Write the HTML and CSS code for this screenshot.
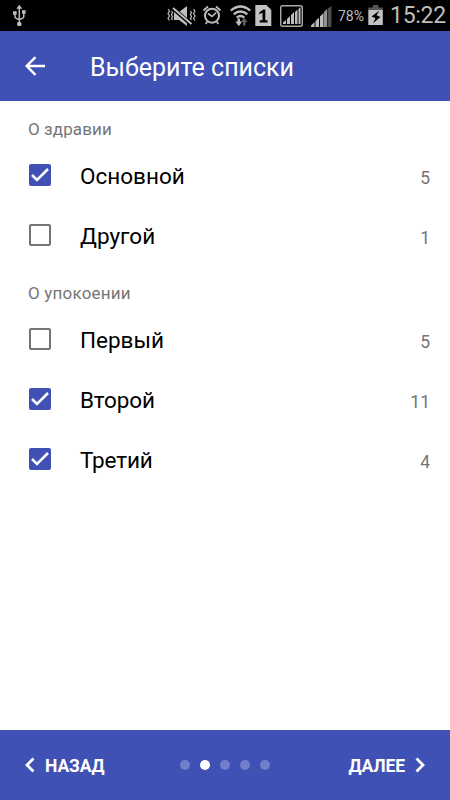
FILE: index.html
```html
<!DOCTYPE html>
<html lang="ru">
<head>
<meta charset="utf-8">
<title>Выберите списки</title>
<link rel="stylesheet" href="styles.css">
</head>
<body>
<div class="screen">
  <div class="status">
    <svg class="usb" width="16" height="24" viewBox="12 4 16 24" fill="none" stroke="#bdbdbd" stroke-width="1.5"><path d="M19.3 8v15M15 14v2.5q0 2 4.3 3q4.5-1 4.5-3V13"/><path d="M19.3 4.8l3 4h-6zM13 11.2h3.7v3.6H13zM22 10.2h3.6v3.6H22z" fill="#bdbdbd" stroke="none"/><circle cx="19.3" cy="24" r="2.3" fill="#bdbdbd" stroke="none"/></svg>
    <svg class="mute" width="30" height="24" viewBox="167 4 30 24" fill="none" stroke="#bdbdbd" stroke-width="1.2"><path d="M174 12h5l8-6v20l-8-6h-5z" fill="#bdbdbd" stroke="none"/><path d="M172 7.5L192 25" stroke="#000" stroke-width="4"/><path d="M173 8l18.500 16" stroke-width="2"/><path d="M168 9l1.500 2-1.500 2.500 1.500 2.500-1.500 2.500 1.500 2M171.500 11l1 1.500-1 2 1 2-1 2 1 1.500M190.500 11l1 1.500-1 2 1 2-1 2 1 1.500M193.500 9l1.500 2-1.500 2.500 1.500 2.500-1.500 2.500 1.500 2"/></svg>
    <svg class="alarm" width="20" height="24" viewBox="202 4 20 24" fill="none" stroke="#bdbdbd" stroke-width="2"><circle cx="212" cy="15.700" r="7"/><path d="M203.500 10.500l4.500-4M216 6.500l4.500 4M205.500 24l2-2.500M218.500 24l-2-2.500M208 13.500l4 3 4.200-4" stroke-width="1.700"/></svg>
    <svg class="wifi" width="22" height="24" viewBox="230 4 22 24" fill="none" stroke="#bdbdbd" stroke-width="2.400"><path d="M230.800 10.600q9.700-8.200 19.400 0M233.700 14.200q6.800-5.600 13.600 0M236.700 17.600q3.800-3 7.600 0"/><path d="M237.500 18.500h2.500v3h2.200l-3.400 4.700-3.400-4.700h2.100z" fill="#bdbdbd" stroke="none"/><path d="M243 25.500V22h-2.200l3.400-4.300 3.300 4.300H245.500v3.500z" fill="#626262" stroke="none"/></svg>
    <svg class="sim" width="17" height="24" viewBox="255 4 17 24"><path d="M255.300 5h11l5 5v16h-16z" fill="#c2c2c2"/><path d="M259.300 12.500l4-3h2v10.700h2.200v2.300h-7.800v-2.300h2.800v-7.500l-3.200 1.500z" fill="#000"/></svg>
    <svg class="boxed" width="24" height="24" viewBox="280 4 24 24"><rect x="280.700" y="5.700" width="21.600" height="20.600" rx="2" fill="none" stroke="#aaa" stroke-width="1.400"/><path d="M283 24v-1.500l3-2.500v4zM287 24v-5l3-3v8zM291 24v-9l3-3v12zM295 24V12l2.500-2.500V24zM298.500 24V9l2-2v17z" fill="#bdbdbd"/></svg>
    <svg class="signal" width="22" height="24" viewBox="310 4 22 24"><path d="M311 27v-1.500l3.500-3.500v5zM315.500 27v-6l3.500-3.500V27zM320 27V16.500l3.500-3.500v14z" fill="#bdbdbd"/><path d="M324 27V12l3-3v18z" fill="#929292"/><path d="M327.500 27V9l4-3v21z" fill="#4d4d4d"/></svg>
    <span class="percent">78%</span>
    <svg class="battery" width="16" height="24" viewBox="368 4 16 24"><path d="M368.300 10V7.500h4.500V5h5.500v2.500h4.500V10z" fill="#555"/><path d="M368.300 10h14.500v15h-14.500z" fill="#c2c2c2"/><path d="M379.500 10.500l-8 6 4 1.800-2.500 5 7.500-6.300-4-1.700z" fill="#000"/></svg>
    <span class="clock">15:22</span>
  </div>
  <header class="appbar">
    <svg width="20" height="20" viewBox="0 0 20 20" fill="none" stroke="#fff" stroke-width="2.400"><path d="M20 10H2M10.500 1.200L1.700 10l8.800 8.800"/></svg>
    <h1>Выберите списки</h1>
  </header>
  <main>
    <h2 class="health">О здравии</h2>
    <div class="row"><span class="box on"><svg viewBox="0 0 22 22"><path d="M3 11l5 5L19 5"/></svg></span><span class="name">Основной</span><span class="count">5</span></div>
    <div class="row"><span class="box"></span><span class="name">Другой</span><span class="count">1</span></div>
    <h2 class="repose">О упокоении</h2>
    <div class="row"><span class="box"></span><span class="name">Первый</span><span class="count">5</span></div>
    <div class="row"><span class="box on"><svg viewBox="0 0 22 22"><path d="M3 11l5 5L19 5"/></svg></span><span class="name tight">Второй</span><span class="count">11</span></div>
    <div class="row"><span class="box on"><svg viewBox="0 0 22 22"><path d="M3 11l5 5L19 5"/></svg></span><span class="name tight">Третий</span><span class="count">4</span></div>
  </main>
  <footer>
    <div class="nav back"><svg width="10" height="16" viewBox="0 0 10 16"><path d="M8.500 1.500L2 8l6.500 6.500"/></svg><span>НАЗАД</span></div>
    <div class="dots"><i></i><i class="active"></i><i></i><i></i><i></i></div>
    <div class="nav next"><span>ДАЛЕЕ</span><svg width="10" height="16" viewBox="0 0 10 16"><path d="M1.500 1.500L8 8l-6.500 6.500"/></svg></div>
  </footer>
</div>
</body>
</html>
```
FILE: styles.css
```css
* { box-sizing: border-box; }
body { margin: 0; font-family: Roboto, "Noto Sans", sans-serif; background: #fff; }
svg { display: block; flex: none; }
.screen { width: 450px; height: 800px; display: flex; flex-direction: column; overflow: hidden; }
.status { height: 31px; flex: none; background: #000; color: #bdbdbd; display: flex; align-items: flex-start; padding: 4px 0 0 12px; white-space: nowrap; }
.mute { margin-left: 139px; }
.alarm { margin-left: 5px; }
.wifi { margin-left: 8px; }
.sim { margin-left: 3px; }
.boxed { margin-left: 8px; }
.signal { margin-left: 6px; }
.percent { width: 30px; margin-left: 6px; font-size: 14px; line-height: 25px; }
.clock { margin-left: 6px; font-size: 23px; line-height: 23px; letter-spacing: -0.3px; }
.appbar { height: 70px; flex: none; background: #3f51b5; color: #fff; display: flex; align-items: center; padding-left: 25px; }
.appbar h1 { margin: 4px 0 0 45px; font-size: 25px; font-weight: 400; line-height: 30px; }
main { flex: 1; padding: 16px 20px 0 28px; }
h2 { margin: 0; height: 28px; font-size: 17px; line-height: 24px; font-weight: 400; color: #757575; letter-spacing: 0.2px; }
.health { letter-spacing: 0.1px; }
.repose { margin-top: 16px; }
.row { height: 60px; display: flex; align-items: center; }
.box { width: 22px; height: 22px; margin: 0 0 0 1px; border: 2px solid #757575; border-radius: 2px; flex: none; }
.box.on { border: 0; background: #3f51b5; }
.box svg { width: 22px; height: 22px; fill: none; stroke: #fff; stroke-width: 2.500; }
.name { margin: 2px 0 0 29px; font-size: 22.500px; line-height: 28px; color: #000; }
.tight { letter-spacing: -0.15px; }
.count { margin: 6px 0 0 auto; font-size: 17.500px; line-height: 24px; color: #757575; }
footer { height: 70px; flex: none; background: #3f51b5; color: #fff; display: flex; align-items: center; padding: 0 25px; }
.nav { display: flex; align-items: center; font-size: 17.500px; font-weight: 700; letter-spacing: -0.1px; line-height: 24px; width: 120px; }
.nav span { margin-top: 2px; }
.nav svg { fill: none; stroke: #fff; stroke-width: 2.800; }
.back { gap: 10px; }
.next { justify-content: flex-end; gap: 10px; }
.dots { flex: 1; display: flex; justify-content: center; gap: 10px; }
.dots i { width: 10px; height: 10px; border-radius: 50%; background: #727fc9; }
.dots .active { background: #fff; }
```
